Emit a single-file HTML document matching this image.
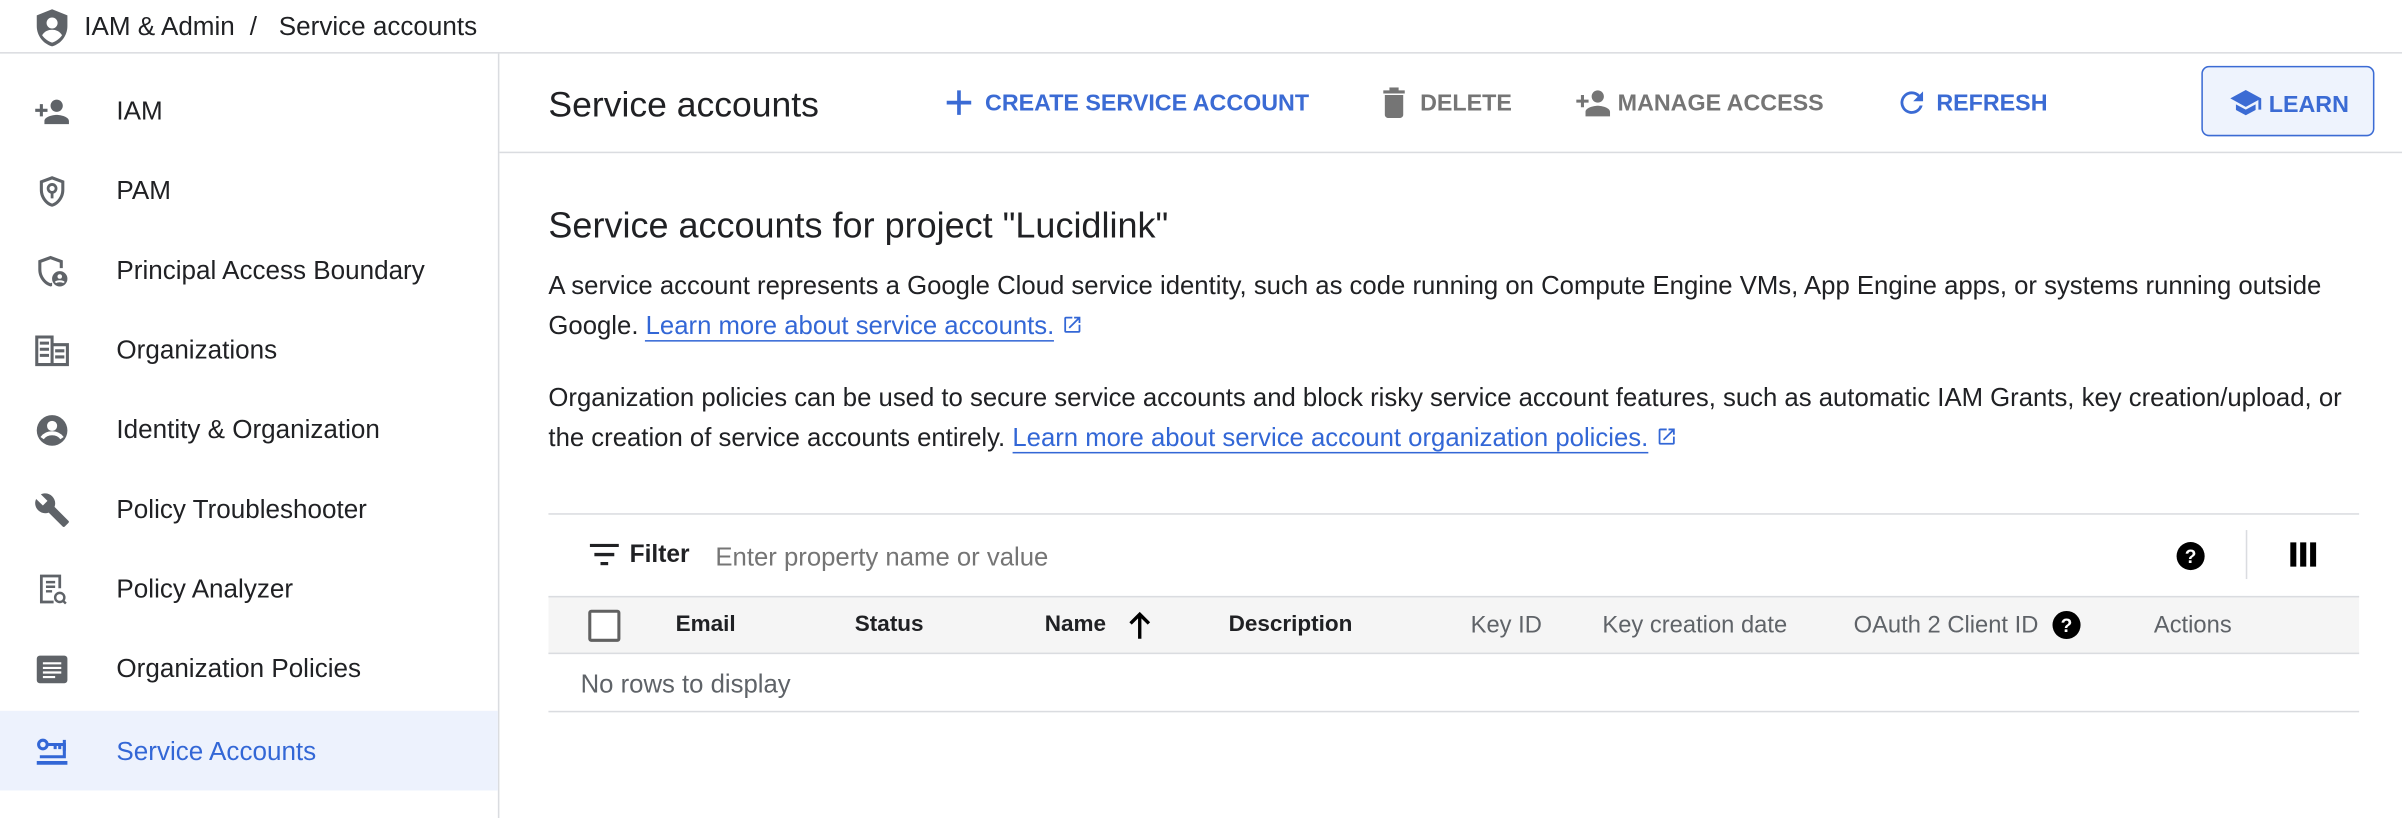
<!DOCTYPE html>
<html><head><meta charset="utf-8"><style>
html,body{margin:0;padding:0;width:2402px;height:818px;overflow:hidden;background:#fff}
#w{position:absolute;left:0;top:0;width:1568px;height:534px;transform:scale(1.5319);transform-origin:0 0;font-family:"Liberation Sans",Arial,sans-serif;color:#202124}
.a{position:absolute;white-space:nowrap}
.nav{position:absolute;left:0;width:325px;height:52px}
.nav .t{position:absolute;left:76px;top:50%;transform:translateY(-45%);font-size:17px}
.nav svg{position:absolute;left:22px;top:15px}
.btn{position:absolute;top:59px;font-size:15.2px;font-weight:bold}
.th{position:absolute;top:400px;font-size:14.7px;font-weight:bold}
.tg{position:absolute;top:400px;font-size:15.5px;color:#5f6368}
</style></head><body><div id="w">
<svg class="a" style="left:22px;top:5px" width="24" height="26" viewBox="0 0 24 26"><path d="M12 1L2 5v7c0 6.5 4.3 11.7 10 13.3 5.7-1.6 10-6.8 10-13.3V5z" fill="#5f6368"/><circle cx="12" cy="10" r="3.6" fill="#fff"/><path d="M5.5 18c1.5-2.6 4-3.6 6.5-3.6s5 1 6.5 3.6c-1.8 2.5-4 4-6.5 4.8-2.5-.8-4.7-2.3-6.5-4.8z" fill="#fff"/></svg>
<div class="a" style="left:55px;top:8px;font-size:17px">IAM &amp; Admin</div>
<div class="a" style="left:163px;top:8px;font-size:17px">/</div>
<div class="a" style="left:182px;top:8px;font-size:17px">Service accounts</div>
<div class="a" style="left:0;top:34px;width:1568px;height:1px;background:#dadce0"></div>
<div class="a" style="left:325px;top:35px;width:1px;height:499px;background:#dadce0"></div>
<div class="nav" style="top:46px"><svg width="24" height="24" viewBox="0 0 24 24"><path d="M15 12c2.2 0 4-1.8 4-4s-1.8-4-4-4-4 1.8-4 4 1.8 4 4 4zm-9-2V7H4v3H1v2h3v3h2v-3h3v-2zm9 4c-2.7 0-8 1.3-8 4v2h16v-2c0-2.7-5.3-4-8-4z" fill="#5f6368"/></svg><div class="t">IAM</div></div>
<div class="nav" style="top:98px"><svg width="24" height="24" viewBox="0 0 24 24"><path d="M12 2L4 5v6c0 5 3.4 9.7 8 11 4.6-1.3 8-6 8-11V5zm0 2.2l6 2.2V11c0 4-2.6 7.7-6 8.9-3.4-1.2-6-4.9-6-8.9V6.4z" fill="#5f6368"/><circle cx="12" cy="10" r="2.6" fill="none" stroke="#5f6368" stroke-width="1.8"/><path d="M12 12.5v4" stroke="#5f6368" stroke-width="1.8"/></svg><div class="t">PAM</div></div>
<div class="nav" style="top:150px"><svg width="24" height="24" viewBox="0 0 24 24"><path d="M11 2L3 5v6c0 5 3.4 9.7 8 11l1-.3v-2.2l-1 .4C7.6 18.7 5 15 5 11V6.4l6-2.2 6 2.2V10h2V5z" fill="#5f6368"/><circle cx="17" cy="17" r="5" fill="#5f6368"/><circle cx="17" cy="15.5" r="1.5" fill="#fff"/><path d="M14.3 19.5c.7-1.2 4.7-1.2 5.4 0" stroke="#fff" stroke-width="1.3" fill="none"/></svg><div class="t">Principal Access Boundary</div></div>
<div class="nav" style="top:202px"><svg width="24" height="24" viewBox="0 0 24 24"><path d="M2 3h10v18H2zM12 8h10v13H12z" fill="none" stroke="#5f6368" stroke-width="2"/><path d="M4 7h6M4 11h6M4 15h6M14 12h6M14 16h6" stroke="#5f6368" stroke-width="2"/></svg><div class="t">Organizations</div></div>
<div class="nav" style="top:254px"><svg width="24" height="24" viewBox="0 0 24 24"><circle cx="12" cy="12" r="10" fill="#5f6368"/><circle cx="12" cy="9" r="3.3" fill="#fff"/><path d="M5.5 17c1.6-2.3 4-3.2 6.5-3.2s4.9.9 6.5 3.2" stroke="#fff" stroke-width="2.6" fill="none"/></svg><div class="t">Identity &amp; Organization</div></div>
<div class="nav" style="top:306px"><svg width="24" height="24" viewBox="0 0 24 24"><path d="M22.7 19l-9.1-9.1c.9-2.3.4-5-1.5-6.9-2-2-5-2.4-7.4-1.3L9 6 6 9 1.6 4.7C.4 7.1.9 10.1 2.9 12.1c1.9 1.9 4.6 2.4 6.9 1.5l9.1 9.1c.4.4 1 .4 1.4 0l2.3-2.3c.5-.4.5-1.1.1-1.4z" fill="#5f6368"/></svg><div class="t">Policy Troubleshooter</div></div>
<div class="nav" style="top:358px"><svg width="24" height="24" viewBox="0 0 24 24"><path d="M13 20H5V3h12v8" fill="none" stroke="#5f6368" stroke-width="1.8"/><path d="M8 7h6M8 10h6M8 13h4" stroke="#5f6368" stroke-width="1.6"/><circle cx="17" cy="17" r="3" fill="none" stroke="#5f6368" stroke-width="1.6"/><path d="M19 19l2 2" stroke="#5f6368" stroke-width="1.6"/></svg><div class="t">Policy Analyzer</div></div>
<div class="nav" style="top:410px"><svg width="24" height="24" viewBox="0 0 24 24"><rect x="2" y="3" width="20" height="18" rx="2" fill="#5f6368"/><path d="M6 8h12M6 11h12M6 14h12M6 17h8" stroke="#fff" stroke-width="1.4"/></svg><div class="t">Organization Policies</div></div>
<div class="nav" style="top:464px;background:#edf2fd"><svg width="24" height="24" viewBox="0 0 24 24"><circle cx="6" cy="7" r="2.8" fill="none" stroke="#3367d6" stroke-width="2"/><path d="M9 7h11v4M14 7v3M17 7v3" stroke="#3367d6" stroke-width="2" fill="none"/><path d="M20 4v11H4" stroke="#3367d6" stroke-width="2" fill="none"/><path d="M2 19h20" stroke="#3367d6" stroke-width="2.4"/></svg><div class="t" style="color:#3367d6">Service Accounts</div></div>
<div class="a" style="left:358px;top:55px;font-size:23.2px">Service accounts</div>
<svg class="a" style="left:617px;top:58px" width="18" height="18" viewBox="0 0 18 18"><path d="M9 1v16M1 9h16" stroke="#3b6bd4" stroke-width="2.4"/></svg>
<div class="btn" style="left:643px;color:#3b6bd4">CREATE SERVICE ACCOUNT</div>
<svg class="a" style="left:902px;top:57px" width="16" height="20" viewBox="0 0 16 20"><path d="M1 2h14v2H1zM5 0h6v2H5zM2 5h12v13c0 1-1 2-2 2H4c-1 0-2-1-2-2z" fill="#757575"/></svg>
<div class="btn" style="left:927px;color:#757575">DELETE</div>
<svg class="a" style="left:1028px;top:57px" width="24" height="20" viewBox="0 0 24 20"><path d="M15 10c2.2 0 4-1.8 4-4s-1.8-4-4-4-4 1.8-4 4 1.8 4 4 4zM6 8V5H4v3H1v2h3v3h2v-3h3V8zm9 4c-2.7 0-8 1.3-8 4v3h16v-3c0-2.7-5.3-4-8-4z" fill="#757575"/></svg>
<div class="btn" style="left:1056px;color:#757575">MANAGE ACCESS</div>
<svg class="a" style="left:1237px;top:56px" width="22" height="22" viewBox="0 0 24 24"><path d="M17.6 6.4A7.9 7.9 0 0 0 12 4a8 8 0 1 0 7.7 10h-2.1A6 6 0 1 1 12 6c1.7 0 3.1.7 4.2 1.8L13 11h7V4z" fill="#3b6bd4"/></svg>
<div class="btn" style="left:1264px;color:#3b6bd4">REFRESH</div>
<div class="a" style="left:1437px;top:43px;width:111px;height:44px;border:1.5px solid #3b6bd4;border-radius:5px;background:#eef3fd"></div>
<svg class="a" style="left:1455px;top:57px" width="22" height="20" viewBox="0 0 24 20"><path d="M12 1L1 7l11 6 9-4.9V15h2V7z" fill="#3b6bd4"/><path d="M5 11.2v4L12 19l7-3.8v-4L12 15z" fill="#3b6bd4"/></svg>
<div class="btn" style="left:1481px;top:60px;color:#3b6bd4">LEARN</div>
<div class="a" style="left:326px;top:99px;width:1242px;height:1px;background:#dadce0"></div>
<div class="a" style="left:358px;top:134px;font-size:23.5px">Service accounts for project "Lucidlink"</div>
<div class="a" style="left:358px;top:174px;font-size:16.8px;line-height:26px">A service account represents a Google Cloud service identity, such as code running on Compute Engine VMs, App Engine apps, or systems running outside<br>Google. <span style="color:#3367d6;border-bottom:1px solid #3367d6">Learn more about service accounts.</span> <svg width="14" height="14" viewBox="0 0 24 24" style="vertical-align:-1px"><path d="M19 19H5V5h7V3H5a2 2 0 0 0-2 2v14a2 2 0 0 0 2 2h14a2 2 0 0 0 2-2v-7h-2zM14 3v2h3.6l-9.8 9.8 1.4 1.4L19 6.4V10h2V3z" fill="#3367d6"/></svg></div>
<div class="a" style="left:358px;top:247px;font-size:16.8px;line-height:26px">Organization policies can be used to secure service accounts and block risky service account features, such as automatic IAM Grants, key creation/upload, or<br>the creation of service accounts entirely. <span style="color:#3367d6;border-bottom:1px solid #3367d6">Learn more about service account organization policies.</span> <svg width="14" height="14" viewBox="0 0 24 24" style="vertical-align:-1px"><path d="M19 19H5V5h7V3H5a2 2 0 0 0-2 2v14a2 2 0 0 0 2 2h14a2 2 0 0 0 2-2v-7h-2zM14 3v2h3.6l-9.8 9.8 1.4 1.4L19 6.4V10h2V3z" fill="#3367d6"/></svg></div>
<div class="a" style="left:358px;top:335px;width:1182px;height:1px;background:#dadce0"></div>
<svg class="a" style="left:385px;top:355px" width="19" height="14" viewBox="0 0 19 14"><path d="M0 1h19M3 7h13M7 13h5" stroke="#202124" stroke-width="2.2"/></svg>
<div class="a" style="left:411px;top:354px;font-size:16px;font-weight:bold">Filter</div>
<div class="a" style="left:467px;top:354px;font-size:16.8px;color:#757575">Enter property name or value</div>
<svg class="a" style="left:1420px;top:353px" width="20" height="20" viewBox="0 0 24 24"><circle cx="12" cy="12" r="11" fill="#000"/><text x="12" y="17.5" font-size="15" font-weight="bold" text-anchor="middle" fill="#fff" font-family="Liberation Sans">?</text></svg>
<div class="a" style="left:1466px;top:346px;width:1px;height:32px;background:#dadce0"></div>
<svg class="a" style="left:1495px;top:354px" width="17" height="16" viewBox="0 0 17 16"><path d="M0 0h4v16H0zM6.5 0h4v16h-4zM13 0h4v16h-4z" fill="#000"/></svg>
<div class="a" style="left:358px;top:389px;width:1182px;height:38px;background:#f5f5f5;border-top:1px solid #dadce0;border-bottom:1px solid #dadce0;box-sizing:border-box"></div>
<div class="a" style="left:384px;top:398px;width:17px;height:17px;border:2px solid #616161;border-radius:2px;background:#fff"></div>
<div class="th" style="left:441px">Email</div>
<div class="th" style="left:558px">Status</div>
<div class="th" style="left:682px">Name</div>
<svg class="a" style="left:736px;top:398px" width="16" height="20" viewBox="0 0 16 20"><path d="M8 19V3M2 9l6-6 6 6" stroke="#000" stroke-width="2.2" fill="none"/></svg>
<div class="th" style="left:802px">Description</div>
<div class="tg" style="left:960px">Key ID</div>
<div class="tg" style="left:1046px">Key creation date</div>
<div class="tg" style="left:1210px">OAuth 2 Client ID</div>
<svg class="a" style="left:1339px;top:398px" width="20" height="20" viewBox="0 0 24 24"><circle cx="12" cy="12" r="11" fill="#000"/><text x="12" y="17.5" font-size="15" font-weight="bold" text-anchor="middle" fill="#fff" font-family="Liberation Sans">?</text></svg>
<div class="tg" style="left:1406px">Actions</div>
<div class="a" style="left:379px;top:437px;font-size:16.8px;color:#5f6368">No rows to display</div>
<div class="a" style="left:358px;top:464px;width:1182px;height:1px;background:#dadce0"></div>
</div></body></html>
